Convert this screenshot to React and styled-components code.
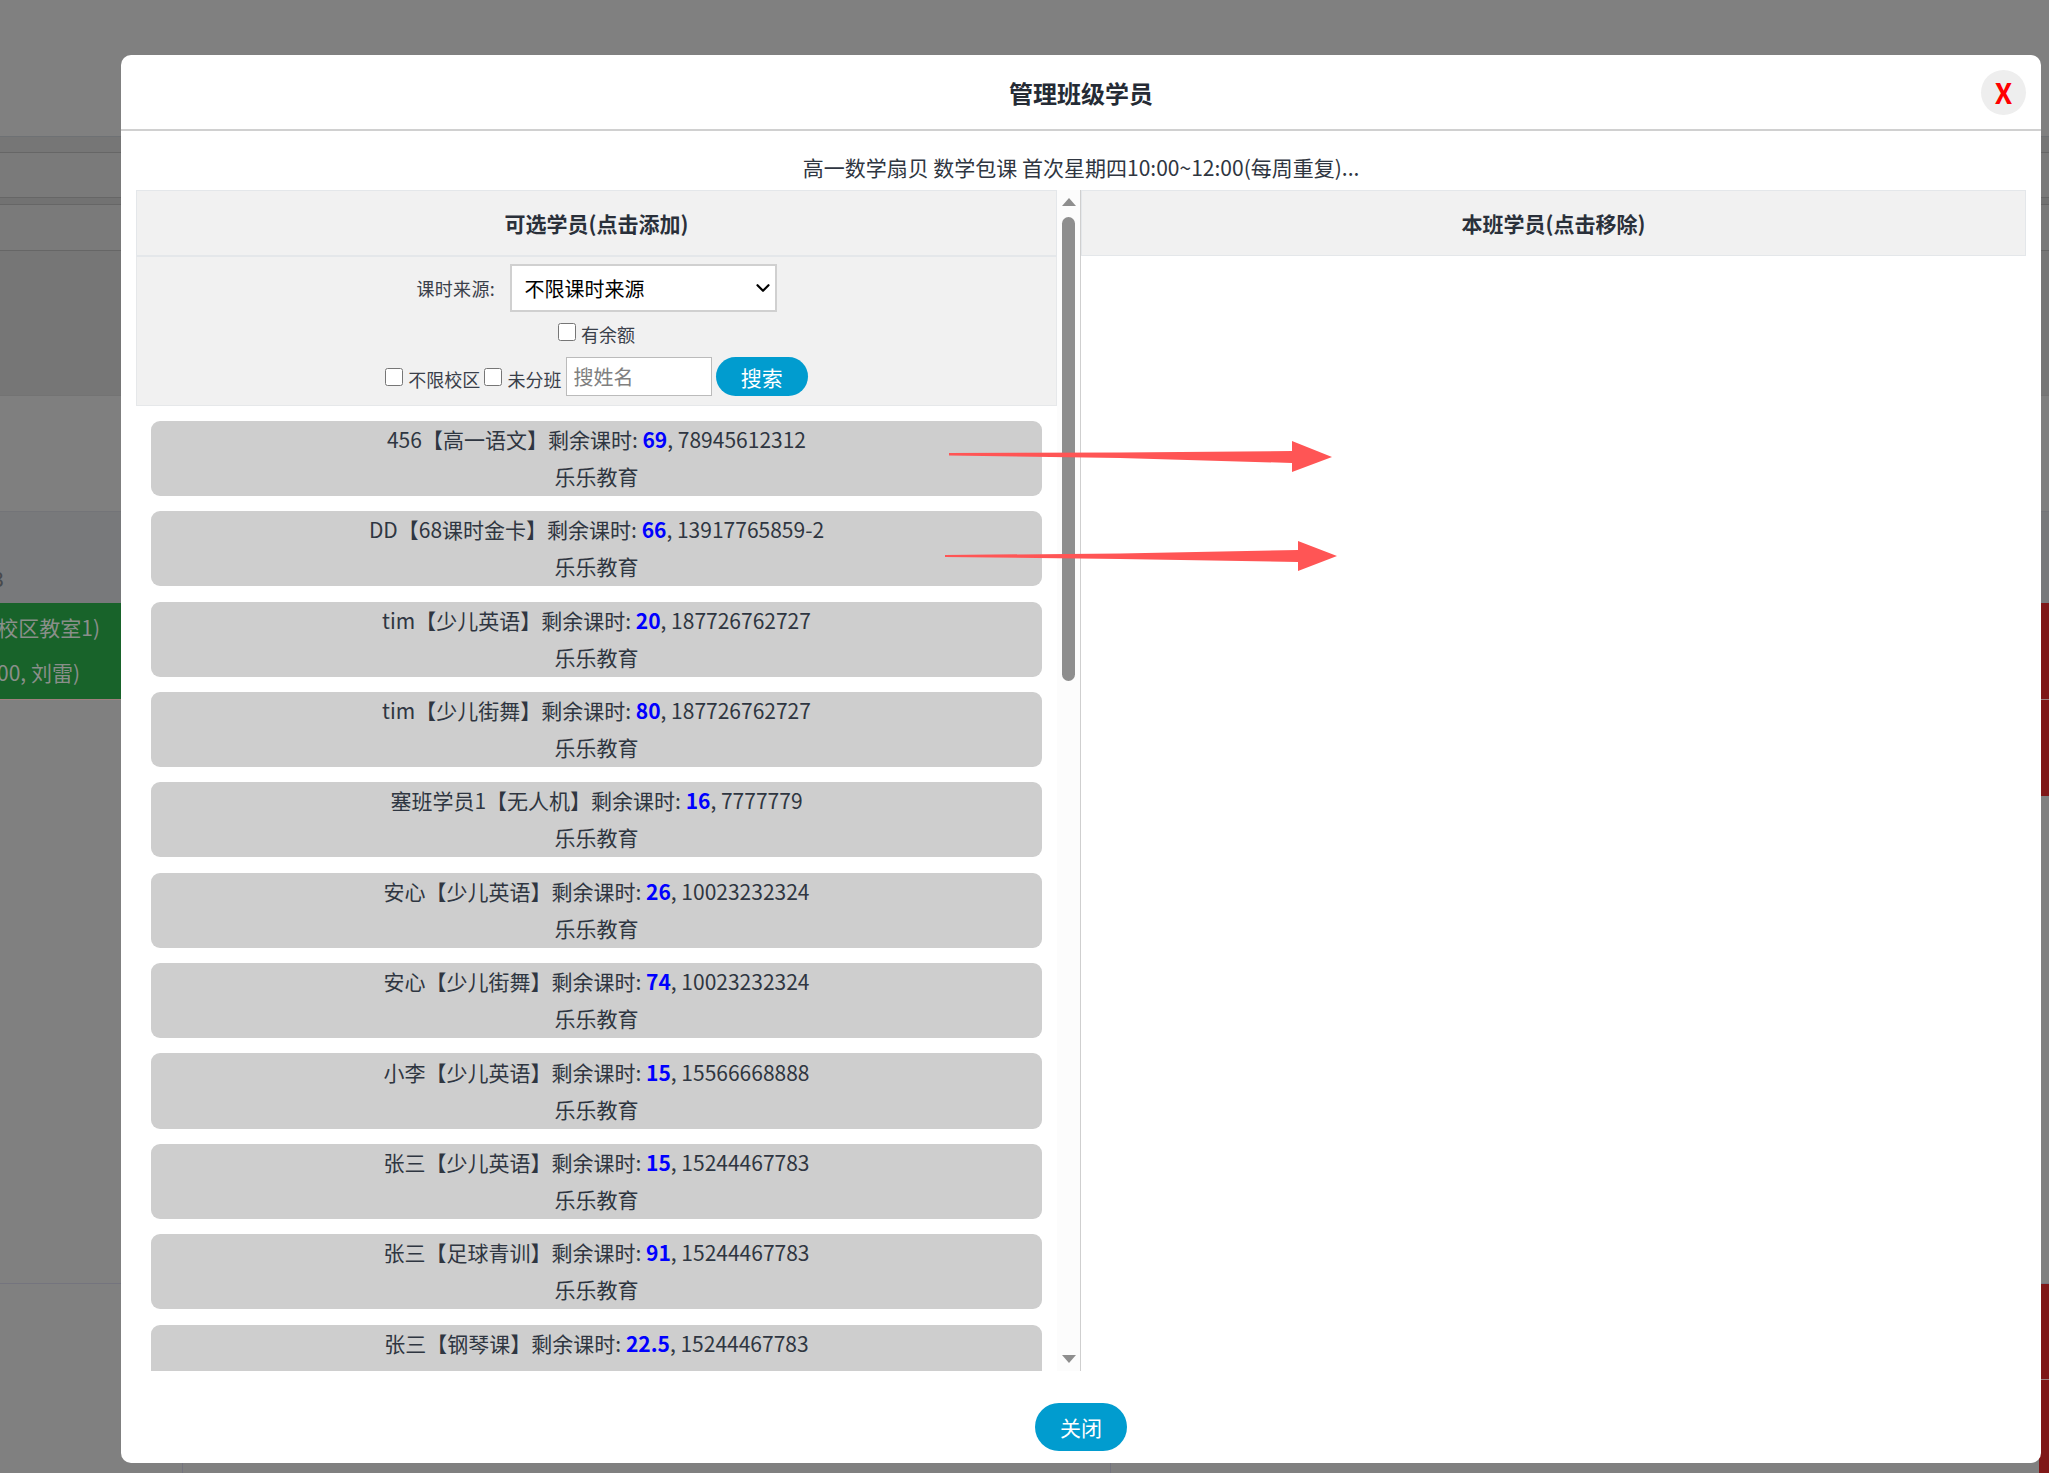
import React from "react";
import styled, { createGlobalStyle } from "styled-components";
import { ChevronDown } from "lucide-react";

const Global = createGlobalStyle`
  html, body { margin: 0; padding: 0; background: #808080; }
  body { font-family: "Noto Sans CJK SC", "Noto Sans", sans-serif; color: #2f3641; overflow: hidden; }
  * { box-sizing: border-box; }
`;

const Page = styled.div`
  position: relative;
  width: 2049px;
  height: 1473px;
  overflow: hidden;
`;

const Backdrop = styled.div`
  display: flex;
  flex-direction: column;
  height: 100%;
`;

const Band = styled.div`
  height: ${(p) => p.$h}px;
  flex: none;
  background: ${(p) => p.$bg};
  border-top: ${(p) => (p.$line ? `1px solid ${p.$line}` : "none")};
  border-bottom: ${(p) => (p.$under ? `1px solid ${p.$under}` : "none")};
  display: flex;
  justify-content: space-between;
  overflow: hidden;
`;

const BehindDigit = styled.div`
  width: 4px;
  display: flex;
  justify-content: flex-end;
  padding-top: 52px;
  font-size: 21px;
  line-height: 28px;
  color: #47494d;
`;

const GreenEvent = styled.div`
  width: 125px;
  height: 96px;
  background: #18632a;
  color: #8a8f8a;
  font-size: 21px;
  display: flex;
  flex-direction: column;
  align-items: flex-end;
  padding: 2px 25px 0 0;
  white-space: nowrap;
  overflow: hidden;
`;

const GreenLine = styled.div`
  height: 45px;
  line-height: 45px;
  margin-right: ${(p) => p.$shift || 0}px;
`;

const RedEvent = styled.div`
  width: 8px;
  align-self: stretch;
  background: #7f1717;
`;

const RedStack = styled.div`
  width: 10px;
  display: flex;
  flex-direction: column;
`;

const RedPiece = styled.div`
  flex: ${(p) => p.$flex};
  background: #7f1717;
  border-bottom: ${(p) => (p.$seam ? "1px solid #a08080" : "none")};
`;

const BottomGrid = styled.div`
  display: grid;
  grid-template-columns: 183px 928px 1fr 10px;
  height: 190px;
  flex: none;
  background: #808080;
  border-top: 1px solid #74747e;
`;

const BottomCell = styled.div`
  border-right: 1px solid #74747e;
`;

const BottomFill = styled.div``;

const Modal = styled.div`
  position: absolute;
  left: 121px;
  top: 55px;
  width: 1920px;
  height: 1408px;
  background: #fff;
  border-radius: 10px;
  display: flex;
  flex-direction: column;
`;

const Header = styled.header`
  height: 76px;
  flex: none;
  position: relative;
  display: flex;
  align-items: center;
  justify-content: center;
  border-bottom: 2px solid #d0d0d0;
`;

const Title = styled.h2`
  margin: 0;
  font-size: 24px;
  font-weight: 700;
  color: #252b35;
`;

const CloseX = styled.button`
  position: absolute;
  right: 15px;
  top: 15px;
  width: 45px;
  height: 45px;
  padding: 0;
  border: none;
  border-radius: 50%;
  background: #eeeeee;
  color: #ff0000;
  font-family: inherit;
  font-size: 28px;
  font-weight: 700;
  line-height: 45px;
`;

const Body = styled.div`
  flex: none;
  padding: 0 15px;
  display: flex;
  flex-direction: column;
`;

const Summary = styled.div`
  height: 59px;
  flex: none;
  padding-top: 21px;
  line-height: 30px;
  font-size: 21px;
  text-align: center;
  color: #2f3641;
`;

const Columns = styled.div`
  height: 1181px;
  flex: none;
  display: grid;
  grid-template-columns: 945px 945px;
`;

const LeftColumn = styled.section`
  display: flex;
  min-height: 0;
  border-right: 1px solid #cfcfcf;
`;

const ListPane = styled.div`
  flex: 1;
  min-width: 0;
  overflow: hidden;
`;

const PanelHead = styled.div`
  height: ${(p) => p.$h}px;
  background: #f1f1f1;
  border: 1px solid #e4e7ea;
  border-bottom-width: ${(p) => p.$bottom || 1}px;
  display: flex;
  align-items: center;
  justify-content: center;
  font-size: 21px;
  font-weight: 700;
  color: #2a303a;
`;

const FilterPanel = styled.div`
  height: 149px;
  background: #f1f1f1;
  border: 1px solid #e6e8ea;
  border-top: none;
  padding-top: 7px;
  display: flex;
  flex-direction: column;
  align-items: center;
  font-size: 18px;
  color: #3a404a;
`;

const SourceRow = styled.div`
  display: flex;
  align-items: center;
  gap: 15px;
  height: 48px;
`;

const SourceLabel = styled.span`
  width: 78px;
  white-space: nowrap;
  letter-spacing: 0.3px;
`;

const SelectWrap = styled.div`
  position: relative;
  width: 267px;
  height: 48px;
`;

const SourceSelect = styled.select`
  appearance: none;
  width: 100%;
  height: 100%;
  padding: 0 13px;
  background: #fff;
  border: 2px solid #d0d0d0;
  border-radius: 0;
  font-family: inherit;
  font-size: 20px;
  color: #000;
`;

const SelectChevron = styled(ChevronDown)`
  position: absolute;
  right: 3px;
  top: 13px;
  color: #000;
  pointer-events: none;
`;

const CheckRow = styled.div`
  display: flex;
  align-items: center;
  margin-top: ${(p) => p.$top}px;
  gap: ${(p) => p.$gap || 0}px;
`;

const CheckLabel = styled.label`
  display: flex;
  align-items: center;
  gap: 5px;
  line-height: 26px;
`;

const CheckText = styled.span`
  padding-top: 4px;
`;

const Tick = styled.input.attrs({ type: "checkbox" })`
  width: 18px;
  height: 18px;
  margin: 0;
`;

const NameInput = styled.input`
  width: 146px;
  height: 39px;
  padding: 0 7px;
  border: 1px solid #bbbbbb;
  background: #fff;
  font-family: inherit;
  font-size: 20px;
  &::placeholder { color: #808080; opacity: 1; }
`;

const PillButton = styled.button`
  width: 92px;
  height: ${(p) => p.$h}px;
  padding: 0;
  border: none;
  border-radius: 24px;
  background: #019ccf;
  color: #fff;
  font-family: inherit;
  font-size: 21px;
`;

const StudentList = styled.div`
  padding: 14.8px 15px 0;
  display: flex;
  flex-direction: column;
  gap: 15.2px;
`;

const StudentRow = styled.div`
  height: 75.2px;
  flex: none;
  padding-top: 0.1px;
  background: #cecece;
  border-radius: 9px;
  font-size: 21px;
  line-height: 37px;
  text-align: center;
  color: #2f3641;
`;

const Hours = styled.b`
  color: #0000ff;
  font-weight: 700;
`;

const FakeScrollbar = styled.div`
  width: 23px;
  flex: none;
  background: #fcfcfc;
  display: flex;
  flex-direction: column;
  align-items: center;
  padding: 8px 0;
`;

const ArrowUp = styled.div`
  width: 0;
  height: 0;
  border-left: 7.5px solid transparent;
  border-right: 7.5px solid transparent;
  border-bottom: 8px solid #8e8e8e;
`;

const ArrowDown = styled(ArrowUp)`
  border-bottom: none;
  border-top: 8px solid #8e8e8e;
  margin-top: auto;
`;

const Thumb = styled.div`
  width: 13px;
  height: 464px;
  margin-top: 11px;
  border-radius: 7px;
  background: #8e8e8e;
`;

const RightColumn = styled.section``;

const Footer = styled.footer`
  flex: 1;
  display: flex;
  justify-content: center;
  padding-top: 32px;
`;

const ArrowLayer = styled.svg`
  position: absolute;
  inset: 0;
  width: 2049px;
  height: 1473px;
  pointer-events: none;
`;

const students = [
  ["456【高一语文】剩余课时: ", "69", ", 78945612312"],
  ["DD【68课时金卡】剩余课时: ", "66", ", 13917765859-2"],
  ["tim【少儿英语】剩余课时: ", "20", ", 187726762727"],
  ["tim【少儿街舞】剩余课时: ", "80", ", 187726762727"],
  ["塞班学员1【无人机】剩余课时: ", "16", ", 7777779"],
  ["安心【少儿英语】剩余课时: ", "26", ", 10023232324"],
  ["安心【少儿街舞】剩余课时: ", "74", ", 10023232324"],
  ["小李【少儿英语】剩余课时: ", "15", ", 15566668888"],
  ["张三【少儿英语】剩余课时: ", "15", ", 15244467783"],
  ["张三【足球青训】剩余课时: ", "91", ", 15244467783"],
  ["张三【钢琴课】剩余课时: ", "22.5", ", 15244467783"],
];

export default function App() {
  return (
    <Page>
      <Global />
      <Backdrop>
        <Band $h={136} $bg="#808080" />
        <Band $h={17} $bg="#767676" $line="#6e7174" $under="#666666" />
        <Band $h={44} $bg="#7a7a7a" />
        <Band $h={8} $bg="#727272" $line="#666666" $under="#666666" />
        <Band $h={45} $bg="#7a7a7a" />
        <Band $h={145} $bg="#767676" $line="#666666" />
        <Band $h={116} $bg="#7f7f7f" $line="#737373" />
        <Band $h={92} $bg="#78797b" $line="#737478">
          <BehindDigit>3</BehindDigit>
        </Band>
        <Band $h={96} $bg="#808080">
          <GreenEvent>
            <GreenLine>校区教室1)</GreenLine>
            <GreenLine $shift={20}>00, 刘雷)</GreenLine>
          </GreenEvent>
          <RedEvent />
        </Band>
        <Band $h={1} $bg="#a08080" />
        <Band $h={96} $bg="#808080">
          <span />
          <RedEvent />
        </Band>
        <Band $h={487} $bg="#808080" />
        <BottomGrid>
          <BottomCell />
          <BottomCell />
          <BottomFill />
          <RedStack>
            <RedPiece $flex="96" $seam />
            <RedPiece $flex="94" />
          </RedStack>
        </BottomGrid>
      </Backdrop>

      <Modal>
        <Header>
          <Title>管理班级学员</Title>
          <CloseX>X</CloseX>
        </Header>
        <Body>
          <Summary>高一数学扇贝 数学包课 首次星期四10:00~12:00(每周重复)...</Summary>
          <Columns>
            <LeftColumn>
              <ListPane>
                <PanelHead $h={67} $bottom={2}>可选学员(点击添加)</PanelHead>
                <FilterPanel>
                  <SourceRow>
                    <SourceLabel>课时来源:</SourceLabel>
                    <SelectWrap>
                      <SourceSelect defaultValue="all">
                        <option value="all">不限课时来源</option>
                      </SourceSelect>
                      <SelectChevron size={22} strokeWidth={2.4} />
                    </SelectWrap>
                  </SourceRow>
                  <CheckRow $top={5}>
                    <CheckLabel>
                      <Tick />
                      <CheckText>有余额</CheckText>
                    </CheckLabel>
                  </CheckRow>
                  <CheckRow $top={10} $gap={4.2}>
                    <CheckLabel>
                      <Tick />
                      <CheckText>不限校区</CheckText>
                    </CheckLabel>
                    <CheckLabel>
                      <Tick />
                      <CheckText>未分班</CheckText>
                    </CheckLabel>
                    <NameInput placeholder="搜姓名" />
                    <PillButton $h={39}>搜索</PillButton>
                  </CheckRow>
                </FilterPanel>
                <StudentList>
                  {students.map(([lead, hours, tail], i) => (
                    <StudentRow key={i}>
                      <div>
                        {lead}
                        <Hours>{hours}</Hours>
                        {tail}
                      </div>
                      <div>乐乐教育</div>
                    </StudentRow>
                  ))}
                </StudentList>
              </ListPane>
              <FakeScrollbar>
                <ArrowUp />
                <Thumb />
                <ArrowDown />
              </FakeScrollbar>
            </LeftColumn>
            <RightColumn>
              <PanelHead $h={66}>本班学员(点击移除)</PanelHead>
            </RightColumn>
          </Columns>
        </Body>
        <Footer>
          <PillButton $h={48}>关闭</PillButton>
        </Footer>
      </Modal>

      <ArrowLayer viewBox="0 0 2049 1473">
        <polygon points="949,453 1120,452.5 1292,451 1292,441 1332,457 1292,472 1292,463 1120,458 949,455.5" fill="#ff5555" />
        <polygon points="945,555 1120,553.5 1298,550 1298,541 1337,556 1298,571 1298,562 1120,559 945,557" fill="#ff5555" />
      </ArrowLayer>
    </Page>
  );
}
